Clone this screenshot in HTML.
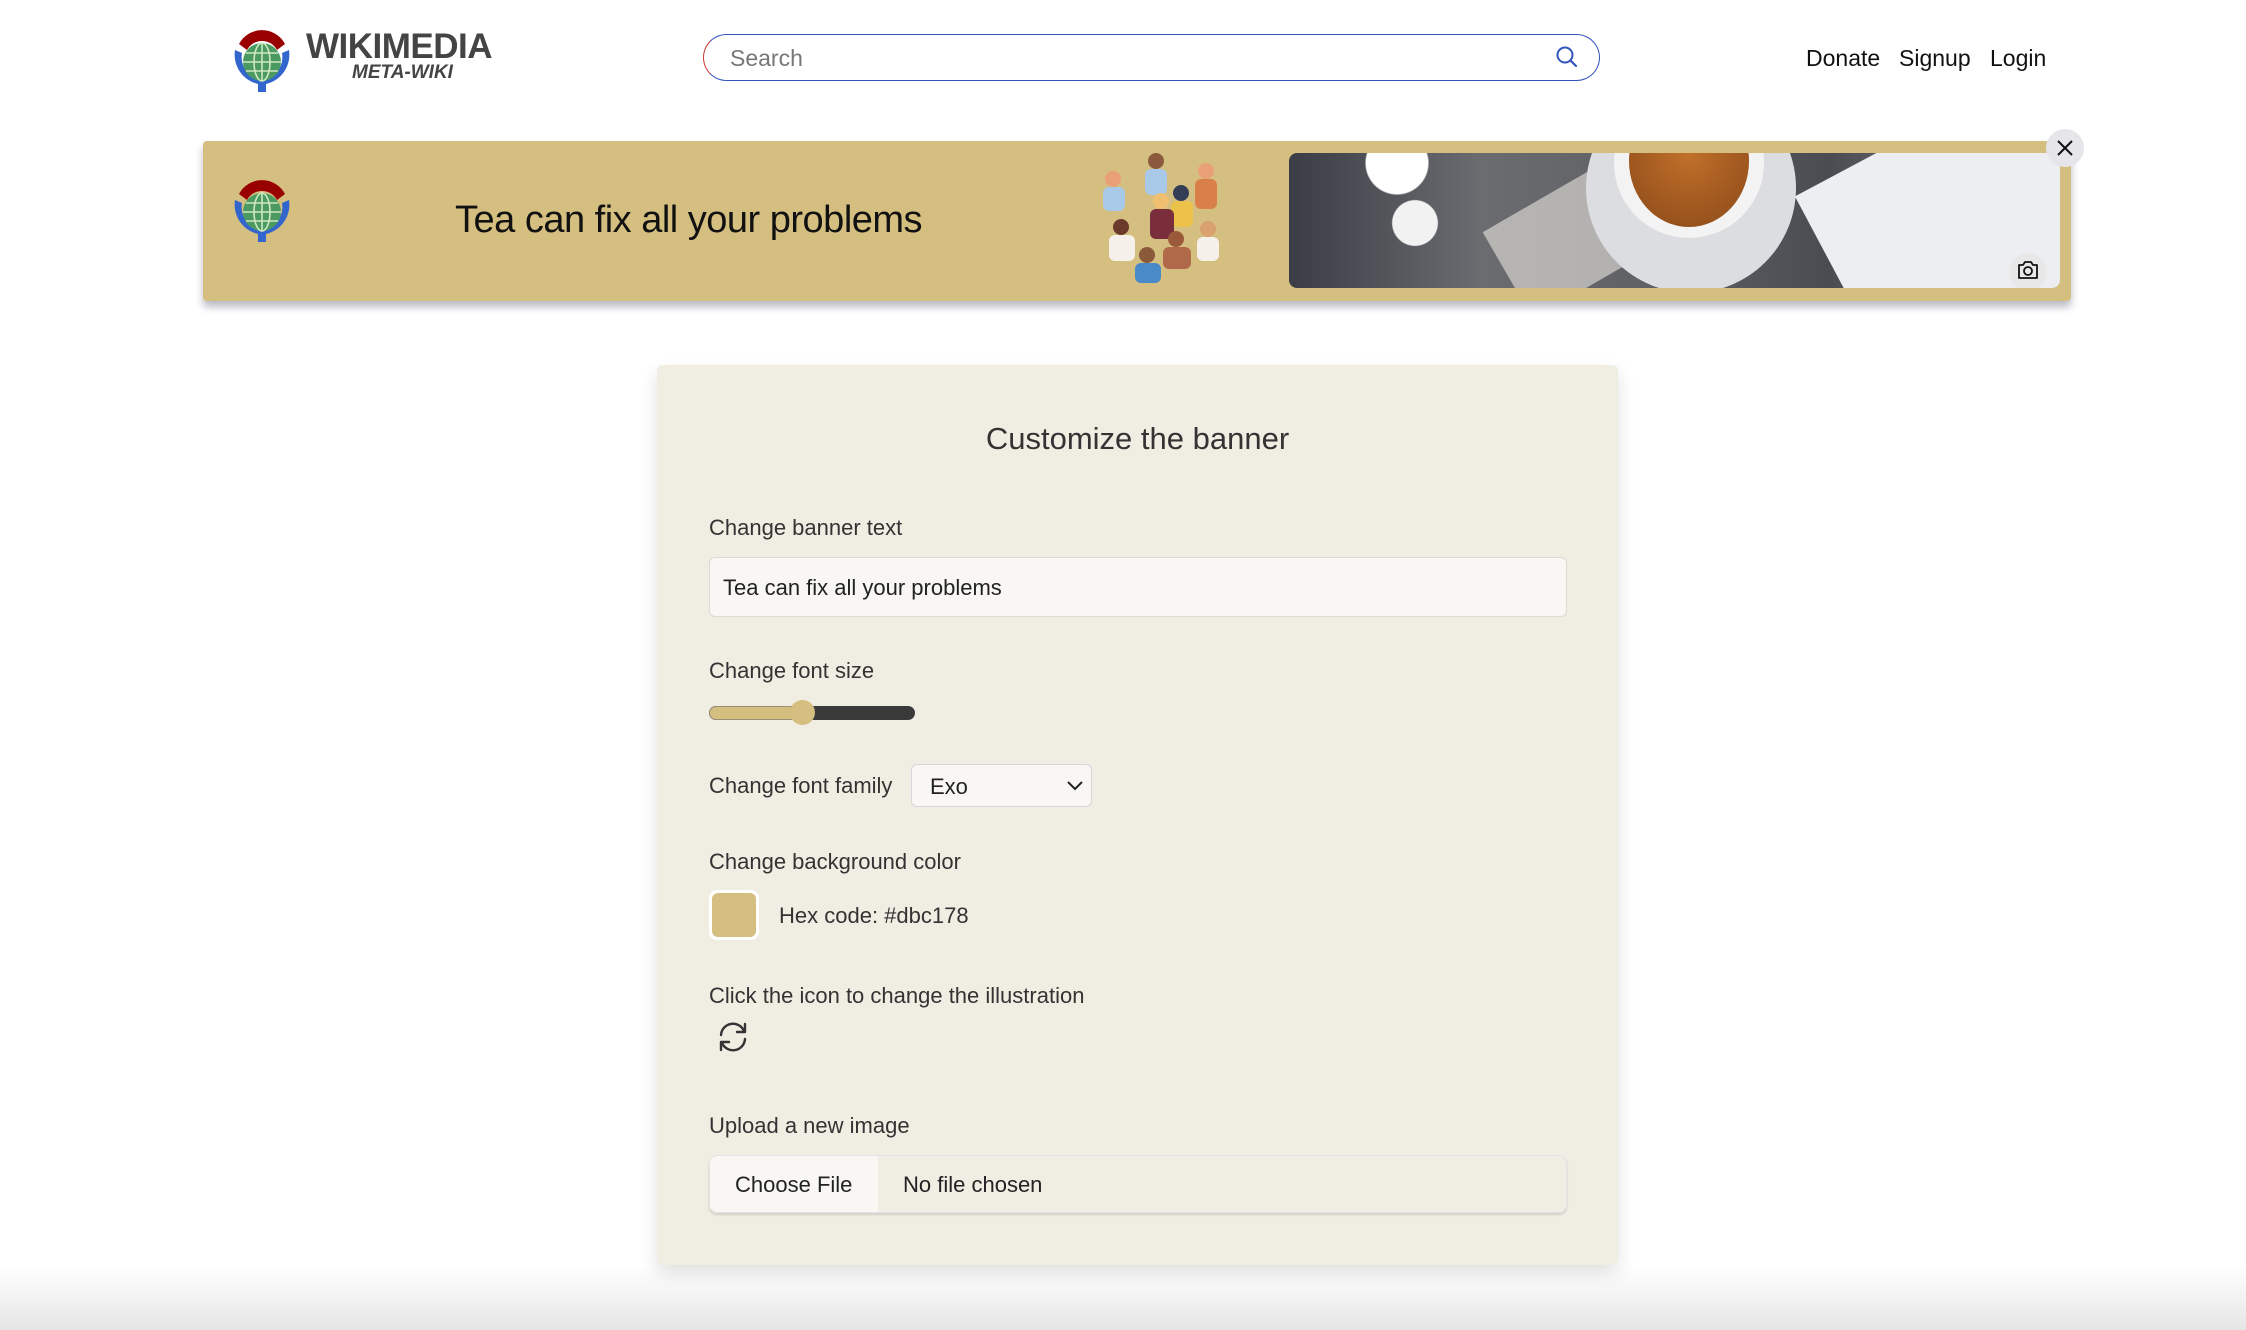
<!DOCTYPE html>
<html><head><meta charset="utf-8"><style>
*{box-sizing:border-box;margin:0;padding:0}
body{width:2246px;height:1330px;overflow:hidden;background:#fff;font-family:"Liberation Sans",sans-serif;position:relative;color:#333}
.abs{position:absolute}
.bottomfade{position:absolute;left:0;right:0;top:1265px;height:65px;background:linear-gradient(#fff,#e6e6e6);}
.lbl{position:absolute;left:709px;font-size:22px;color:#333;line-height:1}
</style></head><body>
<div class="bottomfade"></div>
<!-- header logo -->
<svg class="abs" style="left:229px;top:24px" width="66" height="68" viewBox="0 0 66 68">
<path d="M10 20 A26 26 0 0 1 56 20 L48 26 A17 17 0 0 0 18 26 Z" fill="#990000"/>
<path d="M6 26 A30 30 0 0 0 29 60 L29 68 L37 68 L37 60 A30 30 0 0 0 60 26 L53 29 A23 23 0 0 1 33 56 A23 23 0 0 1 13 29 Z" fill="#36c"/>
<circle cx="33" cy="38" r="19" fill="#4a9a62"/>
<g stroke="#cfe8c0" stroke-width="1.6" fill="none"><ellipse cx="33" cy="38" rx="8" ry="19"/><path d="M14 38h38M17 29h32M17 47h32M33 19v38"/></g>
</svg>
<div class="abs" style="left:306px;top:27px;font-size:35px;font-weight:bold;color:#444;letter-spacing:-0.5px">WIKIMEDIA</div>
<div class="abs" style="left:352px;top:62px;font-size:19px;font-weight:bold;font-style:italic;color:#444">META-WIKI</div>
<!-- search -->
<div class="abs" style="left:703px;top:34px;width:897px;height:47px;border:1.5px solid #3355bb;border-left-color:#c33;border-radius:24px"></div>
<div class="abs" style="left:730px;top:45px;font-size:23px;color:#777">Search</div>
<svg class="abs" style="left:1555px;top:45px" width="24" height="24" viewBox="0 0 24 24"><circle cx="10" cy="10" r="7.5" fill="none" stroke="#3355bb" stroke-width="2"/><path d="M15.5 15.5L21 21" stroke="#3355bb" stroke-width="2.2" stroke-linecap="round"/></svg>
<div class="abs" style="left:1806px;top:45px;font-size:23px;color:#111">Donate</div>
<div class="abs" style="left:1899px;top:45px;font-size:23px;color:#111">Signup</div>
<div class="abs" style="left:1990px;top:45px;font-size:23px;color:#111">Login</div>
<!-- banner -->
<div class="abs" style="left:203px;top:141px;width:1868px;height:160px;background:#d5bf80;border-radius:4px;box-shadow:0 6px 8px rgba(60,60,90,.35)"></div>
<svg class="abs" style="left:229px;top:174px" width="66" height="68" viewBox="0 0 66 68">
<path d="M10 20 A26 26 0 0 1 56 20 L48 26 A17 17 0 0 0 18 26 Z" fill="#990000"/>
<path d="M6 26 A30 30 0 0 0 29 60 L29 68 L37 68 L37 60 A30 30 0 0 0 60 26 L53 29 A23 23 0 0 1 33 56 A23 23 0 0 1 13 29 Z" fill="#36c"/>
<circle cx="33" cy="38" r="19" fill="#4a9a62"/>
<g stroke="#cfe8c0" stroke-width="1.6" fill="none"><ellipse cx="33" cy="38" rx="8" ry="19"/><path d="M14 38h38M17 29h32M17 47h32M33 19v38"/></g>
</svg>
<div class="abs" style="left:455px;top:199px;font-size:38px;color:#111;letter-spacing:-0.5px">Tea can fix all your problems</div>
<!-- people illustration -->
<svg class="abs" style="left:1091px;top:149px" width="140" height="142" viewBox="0 0 140 142">
<g><circle cx="22" cy="30" r="8" fill="#e9a077"/><rect x="12" y="38" width="22" height="24" rx="6" fill="#a9c9e8"/>
<circle cx="65" cy="12" r="8" fill="#8b5a3c"/><rect x="54" y="20" width="22" height="26" rx="6" fill="#a9c9e8"/>
<circle cx="115" cy="22" r="8" fill="#e9a077"/><rect x="104" y="30" width="22" height="30" rx="6" fill="#d9804a"/>
<circle cx="90" cy="44" r="8" fill="#333d55"/><rect x="80" y="52" width="22" height="26" rx="6" fill="#ecc24a"/>
<circle cx="70" cy="52" r="8" fill="#f0c070"/><rect x="59" y="60" width="24" height="30" rx="6" fill="#7a2e3c"/>
<circle cx="30" cy="78" r="8" fill="#6a3a2a"/><rect x="18" y="86" width="26" height="26" rx="6" fill="#f5f0ea"/>
<circle cx="117" cy="80" r="8" fill="#d9a070"/><rect x="106" y="88" width="22" height="24" rx="6" fill="#f5f0ea"/>
<circle cx="85" cy="90" r="8" fill="#9a5a3a"/><rect x="72" y="98" width="28" height="22" rx="6" fill="#b06a4a"/>
<circle cx="56" cy="106" r="8" fill="#8a5a3a"/><rect x="44" y="114" width="26" height="20" rx="6" fill="#4a8ac8"/></g>
</svg>
<!-- photo -->
<div class="abs" style="left:1289px;top:153px;width:771px;height:135px;border-radius:8px;overflow:hidden;background:linear-gradient(90deg,#3a3d45 0%,#6a6c70 25%,#5d5f63 50%,#4a4c52 70%,#8a8c90 100%)">
 <div class="abs" style="left:60px;top:-20px;width:120px;height:150px;background:radial-gradient(circle at 40% 20%,#fff 0 22%,transparent 23%),radial-gradient(circle at 55% 60%,#f2f2f2 0 20%,transparent 21%);"></div>
 <div class="abs" style="left:210px;top:40px;width:130px;height:100px;background:#e9e6e0;opacity:.6;transform:rotate(-30deg)"></div>
 <div class="abs" style="left:297px;top:-70px;width:210px;height:210px;border-radius:50%;background:#dcdde0"></div>
 <div class="abs" style="left:325px;top:-65px;width:150px;height:150px;border-radius:50%;background:#f3f3f3"></div>
 <div class="abs" style="left:340px;top:-58px;width:120px;height:132px;border-radius:50%;background:radial-gradient(circle at 50% 45%,#c0702a,#8a4818)"></div>
 <div class="abs" style="left:540px;top:-30px;width:260px;height:210px;background:#eceef2;transform:rotate(-28deg)"></div>
 <div class="abs" style="left:720px;top:100px;width:38px;height:38px;border-radius:50%;background:#e8e8e8"></div>
 <svg class="abs" style="left:727px;top:106px" width="24" height="22" viewBox="0 0 24 22"><path d="M3 6h4l2-3h6l2 3h4v13H3z" fill="none" stroke="#111" stroke-width="1.8" stroke-linejoin="round"/><circle cx="12" cy="12" r="4" fill="none" stroke="#111" stroke-width="1.8"/></svg>
</div>
<div class="abs" style="left:2046px;top:129px;width:38px;height:38px;border-radius:50%;background:#e6e6ea"></div>
<svg class="abs" style="left:2056px;top:139px" width="18" height="18" viewBox="0 0 18 18"><path d="M2 2L16 16M16 2L2 16" stroke="#111" stroke-width="2"/></svg>
<!-- card -->
<div class="abs" style="left:657px;top:365px;width:961px;height:900px;background:#f0ede3;border-radius:6px;box-shadow:0 8px 18px rgba(0,0,0,.12)"></div>
<div class="abs" style="left:657px;top:421px;width:961px;text-align:center;font-size:31px;color:#333">Customize the banner</div>
<div class="lbl" style="top:517px">Change banner text</div>
<div class="abs" style="left:709px;top:557px;width:858px;height:60px;background:#f8f7f3;border:1px solid #dcdad4;border-radius:6px"></div>
<div class="abs" style="left:723px;top:575px;font-size:22px;color:#222">Tea can fix all your problems</div>
<div class="lbl" style="top:660px">Change font size</div>
<div class="abs" style="left:709px;top:706px;width:206px;height:14px;border-radius:7px;background:#3a3a3a"></div>
<div class="abs" style="left:709px;top:706px;width:95px;height:14px;border-radius:7px 0 0 7px;background:#d5bf80;border:1px solid #9a9078"></div>
<div class="abs" style="left:790px;top:700px;width:25px;height:25px;border-radius:50%;background:#d5bf80"></div>
<div class="lbl" style="top:775px">Change font family</div>
<div class="abs" style="left:911px;top:764px;width:181px;height:43px;background:#f8f7f3;border:1px solid #d4d6de;border-radius:6px"></div>
<div class="abs" style="left:930px;top:774px;font-size:22px;color:#222">Exo</div>
<svg class="abs" style="left:1066px;top:778px" width="18" height="14" viewBox="0 0 18 14"><path d="M2 4l7 7 7-7" fill="none" stroke="#222" stroke-width="2"/></svg>
<div class="lbl" style="top:851px">Change background color</div>
<div class="abs" style="left:709px;top:890px;width:50px;height:50px;border-radius:8px;background:#fff;padding:3px"><div style="width:100%;height:100%;border-radius:6px;background:#d5bf80"></div></div>
<div class="abs" style="left:779px;top:903px;font-size:22px;color:#333">Hex code: #dbc178</div>
<div class="lbl" style="top:985px">Click the icon to change the illustration</div>
<svg class="abs" style="left:716px;top:1020px" width="34" height="34" viewBox="0 0 34 34" fill="none" stroke="#333" stroke-width="2.4" stroke-linecap="round" stroke-linejoin="round"><path d="M5 15A12 12 0 0 1 28 11"/><path d="M29 4v8h-8"/><path d="M29 19A12 12 0 0 1 6 23"/><path d="M5 30v-8h8"/></svg>
<div class="lbl" style="top:1115px">Upload a new image</div>
<div class="abs" style="left:709px;top:1155px;width:858px;height:58px;background:#f0ede3;border:1px solid #e2e2e6;border-radius:8px;box-shadow:0 2px 2px rgba(0,0,0,.12);overflow:hidden"><div style="width:168px;height:100%;background:#f8f7f3"></div></div>
<div class="abs" style="left:735px;top:1172px;font-size:22px;color:#222">Choose File</div>
<div class="abs" style="left:903px;top:1172px;font-size:22px;color:#222">No file chosen</div>
</body></html>
